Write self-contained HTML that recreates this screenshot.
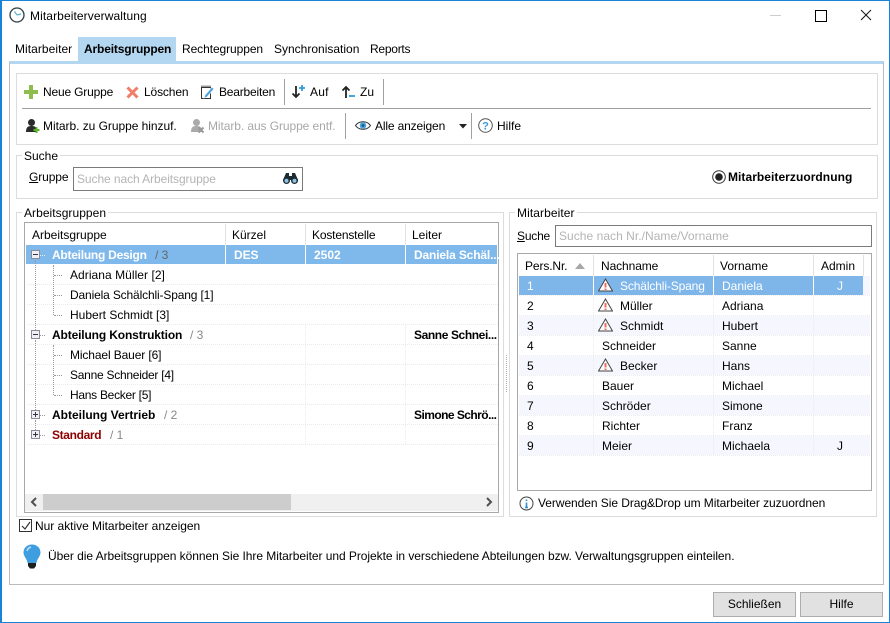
<!DOCTYPE html>
<html lang="de"><head><meta charset="utf-8"><title>Mitarbeiterverwaltung</title>
<style>
html,body{margin:0;padding:0;background:#fff}
#w{position:relative;width:890px;height:623px;overflow:hidden;background:#fff;font:12px/16px "Liberation Sans",sans-serif;color:#000}
#w div,#w svg{position:absolute}
.t{white-space:nowrap;height:16px}
.b{font-weight:bold}
.g{border:1px solid #dcdcdc;box-sizing:border-box}
.v{width:1px;background:#a0a0a0}
.l{background:#fff;padding:0 2px}
.r{left:27px;width:471px;height:0;border-bottom:1px dotted #ebebeb}
.q{left:519px;width:351px;height:0;border-bottom:1px dotted #ececec}
.n{color:#666}
.w{color:#fff}
.x{width:9px;height:9px;box-sizing:border-box;border:1px solid #8a8a9a;background:#f0f0f4}
u{text-decoration:underline}
</style></head><body><div id="w">

<div style="left:0;top:0;width:890px;height:623px;box-sizing:border-box;border:1px solid #1883d7;border-left-width:2px"></div>

<svg style="left:9px;top:7px" width="16" height="16" viewBox="0 0 16 16"><circle cx="8" cy="8" r="7" fill="#fff" stroke="#2c3e46" stroke-width="1.3"/><path d="M8 8L5.500 4.500M8 8L12 7" stroke="#5bb4c8" stroke-width="1.2" fill="none"/></svg>
<div class="t" style="left:30px;top:8px;letter-spacing:.1px">Mitarbeiterverwaltung</div>

<div style="left:770px;top:15px;width:11px;height:1px;background:#ccc"></div>
<div style="left:815px;top:10px;width:10px;height:10px;border:1px solid #000"></div>
<svg style="left:860px;top:9px" width="12" height="12" viewBox="0 0 12 12"><path d="M1 1L11 11M11 1L1 11" stroke="#111" stroke-width="1" fill="none"/></svg>

<div style="left:78px;top:37px;width:98px;height:24px;background:#b3d7f0"></div>
<div class="t" style="left:15px;top:41px;letter-spacing:.05px">Mitarbeiter</div>
<div class="t b" style="left:84px;top:41px;letter-spacing:-.15px">Arbeitsgruppen</div>
<div class="t" style="left:182px;top:41px;letter-spacing:-.08px">Rechtegruppen</div>
<div class="t" style="left:274px;top:41px">Synchronisation</div>
<div class="t" style="left:370px;top:41px;letter-spacing:-.25px">Reports</div>

<div style="left:9px;top:61px;width:875px;height:524px;box-sizing:border-box;border:1px solid #bcbcbc;border-top:3px solid #b3d7f0"></div>

<div class="g" style="left:16px;top:73px;width:862px;height:72px"></div>
<div style="left:22px;top:108px;width:849px;height:1px;background:#a0a0a0"></div>
<div class="v" style="left:284px;top:79px;height:26px"></div>
<div class="v" style="left:383px;top:79px;height:26px"></div>
<div class="v" style="left:345px;top:113px;height:26px"></div>
<div class="v" style="left:471px;top:113px;height:26px"></div>

<svg style="left:24px;top:85px" width="14" height="14"><path d="M5 0h4v5h5v4H9v5H5V9H0V5h5z" fill="#8fbc4f"/></svg>
<div class="t" style="left:43px;top:84px;letter-spacing:-.18px">Neue Gruppe</div>
<svg style="left:126px;top:86px" width="13" height="13"><path d="M1.500 1.500L11.500 11.500M11.500 1.500L1.500 11.500" stroke="#ef7f68" stroke-width="3" fill="none"/></svg>
<div class="t" style="left:144px;top:84px;letter-spacing:-.14px">Löschen</div>
<svg style="left:200px;top:84px" width="15" height="16"><path d="M1.500 3.500h9v11h-9z" fill="#fff" stroke="#333"/><path d="M2 1.500v2M4 1.500v2M6 1.500v2M8 1.500v2M10 1.500v2" stroke="#333"/><path d="M5 11L12 3l2 2-7 8-3 1z" fill="#4aa3df" stroke="#fff" stroke-width=".6"/></svg>
<div class="t" style="left:219px;top:84px;letter-spacing:-.2px">Bearbeiten</div>
<svg style="left:291px;top:84px" width="15" height="15"><path d="M5 2v11M1.500 9.500L5 13l3.500-3.500" stroke="#222" stroke-width="1.800" fill="none"/><path d="M11 1v6M8 4h6" stroke="#2f9ad8" stroke-width="1.800"/></svg>
<div class="t" style="left:310px;top:84px;letter-spacing:.2px">Auf</div>
<svg style="left:341px;top:84px" width="15" height="15"><path d="M5 14V3M1.500 6.500L5 3l3.500 3.500" stroke="#222" stroke-width="1.800" fill="none"/><path d="M8 12h6" stroke="#2f9ad8" stroke-width="1.800"/></svg>
<div class="t" style="left:360px;top:84px">Zu</div>

<svg style="left:26px;top:119px" width="14" height="15"><circle cx="5.500" cy="3.500" r="3.500" fill="#2b2b2b"/><path d="M0 13c0-5 2-6 5.500-6S11 8 11 13z" fill="#2b2b2b"/><path d="M10.500 8v6M7.500 11h6" stroke="#5fb52e" stroke-width="2"/></svg>
<div class="t" style="left:43px;top:118px;letter-spacing:-.04px">Mitarb. zu Gruppe hinzuf.</div>
<svg style="left:191px;top:119px" width="14" height="15"><circle cx="5.500" cy="3.500" r="3.500" fill="#aaa"/><path d="M0 13c0-5 2-6 5.500-6S11 8 11 13z" fill="#aaa"/><path d="M7.500 8.500l5 5M12.500 8.500l-5 5" stroke="#999" stroke-width="2"/></svg>
<div class="t" style="left:208px;top:118px;color:#a8a8a8;letter-spacing:-.08px">Mitarb. aus Gruppe entf.</div>
<svg style="left:355px;top:119px" width="16" height="13"><path d="M.5 6.500C4 1.500 12 1.500 15.500 6.500 12 11.500 4 11.500.5 6.500z" fill="#fff" stroke="#333"/><circle cx="8" cy="6.500" r="3.300" fill="#4aa3df"/><circle cx="8" cy="6.500" r="1.400" fill="#22557a"/></svg>
<div class="t" style="left:375px;top:118px;letter-spacing:-.15px">Alle anzeigen</div>
<svg style="left:459px;top:124px" width="8" height="5"><path d="M0 0h8L4 4.500z" fill="#222"/></svg>
<svg style="left:478px;top:118px" width="15" height="15"><circle cx="7.500" cy="7.500" r="6.800" fill="#fff" stroke="#555"/><text x="7.500" y="11.500" text-anchor="middle" font-family="Liberation Sans" font-weight="bold" font-size="11" fill="#3a9ad9">?</text></svg>
<div class="t" style="left:497px;top:118px">Hilfe</div>

<div class="g" style="left:16px;top:155px;width:862px;height:44px"></div>
<div class="t l" style="left:22px;top:148px">Suche</div>
<div class="t" style="left:29px;top:169px;letter-spacing:-.1px"><u>G</u>ruppe</div>
<div style="left:73px;top:167px;width:230px;height:24px;box-sizing:border-box;border:1px solid #7a7a7a"></div>
<div class="t" style="left:77px;top:171px;color:#b4b4b4;letter-spacing:-.08px">Suche nach Arbeitsgruppe</div>
<svg style="left:282px;top:172px" width="17" height="13"><path d="M4 1h3v3h3V1h3l3 7H1z" fill="#1d2b33"/><circle cx="4.500" cy="8.500" r="3.500" fill="#1d2b33"/><circle cx="12.500" cy="8.500" r="3.500" fill="#1d2b33"/><circle cx="4.500" cy="8.800" r="2" fill="#8ec4e6"/><circle cx="12.500" cy="8.800" r="2" fill="#8ec4e6"/></svg>
<svg style="left:712px;top:170px" width="14" height="14"><circle cx="7" cy="7" r="6.300" fill="#fff" stroke="#333"/><circle cx="7" cy="7" r="3.800" fill="#222"/></svg>
<div class="t b" style="left:728px;top:169px;letter-spacing:.05px">Mitarbeiterzuordnung</div>

<div class="g" style="left:16px;top:212px;width:488px;height:305px"></div>
<div class="t l" style="left:22px;top:205px;letter-spacing:.05px">Arbeitsgruppen</div>
<div style="left:24px;top:222px;width:475px;height:291px;box-sizing:border-box;border:1px solid #a8a8a8"></div>

<div class="t" style="left:32px;top:227px">Arbeitsgruppe</div>
<div class="t" style="left:232px;top:227px">Kürzel</div>
<div class="t" style="left:312px;top:227px;letter-spacing:-.17px">Kostenstelle</div>
<div class="t" style="left:412px;top:227px">Leiter</div>
<div style="left:225px;top:224px;width:1px;height:21px;background:#e2e2e2"></div>
<div style="left:305px;top:224px;width:1px;height:21px;background:#e2e2e2"></div>
<div style="left:405px;top:224px;width:1px;height:21px;background:#e2e2e2"></div>

<div style="left:26px;top:245px;width:471px;height:19px;background:#7fb9ec"></div>
<div style="left:225px;top:245px;width:1px;height:19px;background:#fff"></div>
<div style="left:305px;top:245px;width:1px;height:19px;background:#fff"></div>
<div style="left:405px;top:245px;width:1px;height:19px;background:#fff"></div>

<div class="r" style="top:284px"></div><div class="r" style="top:304px"></div><div class="r" style="top:324px"></div><div class="r" style="top:344px"></div><div class="r" style="top:364px"></div><div class="r" style="top:384px"></div><div class="r" style="top:404px"></div><div class="r" style="top:424px"></div><div class="r" style="top:444px"></div>
<div style="left:305px;top:325px;height:119px;width:0;border-left:1px dotted #ececec"></div>
<div style="left:405px;top:325px;height:119px;width:0;border-left:1px dotted #ececec"></div>

<div style="left:35px;top:260px;height:70px;width:0;border-left:1px dotted #999"></div>
<div style="left:35px;top:340px;height:70px;width:0;border-left:1px dotted #999"></div>
<div style="left:35px;top:420px;height:10px;width:0;border-left:1px dotted #999"></div>
<div style="left:53px;top:265px;height:50px;width:0;border-left:1px dotted #999"></div>
<div style="left:53px;top:345px;height:50px;width:0;border-left:1px dotted #999"></div>
<div style="left:54px;top:275px;width:8px;height:0;border-top:1px dotted #999"></div>
<div style="left:54px;top:295px;width:8px;height:0;border-top:1px dotted #999"></div>
<div style="left:54px;top:315px;width:8px;height:0;border-top:1px dotted #999"></div>
<div style="left:54px;top:355px;width:8px;height:0;border-top:1px dotted #999"></div>
<div style="left:54px;top:375px;width:8px;height:0;border-top:1px dotted #999"></div>
<div style="left:54px;top:395px;width:8px;height:0;border-top:1px dotted #999"></div>
<div style="left:40px;top:255px;width:5px;height:0;border-top:1px dotted #eee"></div>
<div style="left:40px;top:335px;width:5px;height:0;border-top:1px dotted #999"></div>
<div style="left:40px;top:415px;width:5px;height:0;border-top:1px dotted #999"></div>
<div style="left:40px;top:435px;width:5px;height:0;border-top:1px dotted #999"></div>

<div class="x" style="left:31px;top:250px"></div><div style="left:33px;top:254px;width:5px;height:1px;background:#334"></div>
<div class="x" style="left:31px;top:330px"></div><div style="left:33px;top:334px;width:5px;height:1px;background:#334"></div>
<div class="x" style="left:31px;top:410px"></div><div style="left:33px;top:414px;width:5px;height:1px;background:#334"></div><div style="left:35px;top:412px;width:1px;height:5px;background:#334"></div>
<div class="x" style="left:31px;top:430px"></div><div style="left:33px;top:434px;width:5px;height:1px;background:#334"></div><div style="left:35px;top:432px;width:1px;height:5px;background:#334"></div>

<div class="t b w" style="left:52px;top:247px;letter-spacing:-.25px">Abteilung Design</div><div class="t n" style="left:155px;top:247px">/ 3</div>
<div class="t b w" style="left:234px;top:247px;letter-spacing:-.1px">DES</div>
<div class="t b w" style="left:314px;top:247px">2502</div>
<div class="t b w" style="left:414px;top:247px;letter-spacing:-.15px">Daniela Schäl...</div>
<div class="t" style="left:70px;top:267px;letter-spacing:.05px">Adriana Müller [2]</div>
<div class="t" style="left:70px;top:287px;letter-spacing:-.15px">Daniela Schälchli-Spang [1]</div>
<div class="t" style="left:70px;top:307px">Hubert Schmidt [3]</div>
<div class="t b" style="left:52px;top:327px;letter-spacing:-.14px">Abteilung Konstruktion</div><div class="t n" style="left:190px;top:327px;color:#888">/ 3</div>
<div class="t b" style="left:414px;top:327px;letter-spacing:-.4px">Sanne Schnei...</div>
<div class="t" style="left:70px;top:347px;letter-spacing:-.12px">Michael Bauer [6]</div>
<div class="t" style="left:70px;top:367px;letter-spacing:-.26px">Sanne Schneider [4]</div>
<div class="t" style="left:70px;top:387px;letter-spacing:-.28px">Hans Becker [5]</div>
<div class="t b" style="left:52px;top:407px">Abteilung Vertrieb</div><div class="t n" style="left:164px;top:407px;color:#888">/ 2</div>
<div class="t b" style="left:414px;top:407px;letter-spacing:-.55px">Simone Schrö...</div>
<div class="t b" style="left:52px;top:427px;color:#8b0000;letter-spacing:-.35px">Standard</div><div class="t n" style="left:110px;top:427px;color:#888">/ 1</div>

<div style="left:25px;top:494px;width:473px;height:17px;background:#f0f0f0"></div>
<div style="left:43px;top:494px;width:248px;height:16px;background:#cdcdcd"></div>
<svg style="left:30px;top:497px" width="8" height="10"><path d="M6 1L2 5l4 4" stroke="#505050" stroke-width="2" fill="none"/></svg>
<svg style="left:485px;top:497px" width="8" height="10"><path d="M2 1l4 4-4 4" stroke="#505050" stroke-width="2" fill="none"/></svg>

<div style="left:506px;top:355px;height:37px;width:0;border-left:1px dotted #aaa"></div>

<div class="g" style="left:509px;top:212px;width:368px;height:305px"></div>
<div class="t l" style="left:515px;top:205px;letter-spacing:.08px">Mitarbeiter</div>
<div class="t" style="left:517px;top:228px;letter-spacing:-.2px"><u>S</u>uche</div>
<div style="left:555px;top:225px;width:317px;height:22px;box-sizing:border-box;border:1px solid #7a7a7a"></div>
<div class="t" style="left:559px;top:228px;color:#b4b4b4;letter-spacing:.04px">Suche nach Nr./Name/Vorname</div>

<div style="left:517px;top:253px;width:355px;height:238px;box-sizing:border-box;border:1px solid #a8a8a8"></div>
<div class="t" style="left:525px;top:258px;letter-spacing:-.12px">Pers.Nr.</div>
<svg style="left:575px;top:263px" width="10" height="6"><path d="M0 6h10L5 0z" fill="#a8a8a8"/></svg>
<div class="t" style="left:601px;top:258px;letter-spacing:-.1px">Nachname</div>
<div class="t" style="left:720px;top:258px">Vorname</div>
<div class="t" style="left:821px;top:258px">Admin</div>
<div style="left:593px;top:255px;width:1px;height:21px;background:#e2e2e2"></div>
<div style="left:713px;top:255px;width:1px;height:21px;background:#e2e2e2"></div>
<div style="left:813px;top:255px;width:1px;height:21px;background:#e2e2e2"></div>
<div style="left:863px;top:255px;width:1px;height:21px;background:#e2e2e2"></div>

<div style="left:519px;top:296px;width:351px;height:19px;background:#fff"></div>
<div style="left:519px;top:316px;width:351px;height:19px;background:#f6f6fe"></div>
<div style="left:519px;top:356px;width:351px;height:19px;background:#f6f6fe"></div>
<div style="left:519px;top:396px;width:351px;height:19px;background:#f6f6fe"></div>
<div style="left:519px;top:436px;width:351px;height:19px;background:#f6f6fe"></div>
<div style="left:519px;top:276px;width:351px;height:19px;background:#f6f6fe"></div>
<div style="left:519px;top:276px;width:344px;height:19px;background:#7fb6ea"></div>
<div style="left:593px;top:276px;width:1px;height:19px;background:#fff"></div>
<div style="left:713px;top:276px;width:1px;height:19px;background:#fff"></div>
<div style="left:813px;top:276px;width:1px;height:19px;background:#fff"></div>
<div class="q" style="top:295px"></div><div class="q" style="top:315px"></div><div class="q" style="top:335px"></div><div class="q" style="top:355px"></div><div class="q" style="top:375px"></div><div class="q" style="top:395px"></div><div class="q" style="top:415px"></div><div class="q" style="top:435px"></div><div class="q" style="top:455px"></div>
<div style="left:593px;top:296px;height:159px;width:0;border-left:1px dotted #ececec"></div>
<div style="left:713px;top:296px;height:159px;width:0;border-left:1px dotted #ececec"></div>
<div style="left:813px;top:296px;height:159px;width:0;border-left:1px dotted #ececec"></div>

<svg style="left:598px;top:278px" width="15" height="14"><path d="M7.500 1L14.500 13H.5z" fill="#fff" stroke="#444"/><path d="M7.500 5v4.500M7.500 10.500v1.500" stroke="#ef6f5e" stroke-width="2"/></svg>
<svg style="left:598px;top:298px" width="15" height="14"><path d="M7.500 1L14.500 13H.5z" fill="#fff" stroke="#444"/><path d="M7.500 5v4.500M7.500 10.500v1.500" stroke="#ef6f5e" stroke-width="2"/></svg>
<svg style="left:598px;top:318px" width="15" height="14"><path d="M7.500 1L14.500 13H.5z" fill="#fff" stroke="#444"/><path d="M7.500 5v4.500M7.500 10.500v1.500" stroke="#ef6f5e" stroke-width="2"/></svg>
<svg style="left:598px;top:358px" width="15" height="14"><path d="M7.500 1L14.500 13H.5z" fill="#fff" stroke="#444"/><path d="M7.500 5v4.500M7.500 10.500v1.500" stroke="#ef6f5e" stroke-width="2"/></svg>

<div class="t w" style="left:527px;top:278px">1</div><div class="t w" style="left:620px;top:278px;letter-spacing:-.13px">Schälchli-Spang</div><div class="t w" style="left:722px;top:278px">Daniela</div><div class="t w" style="left:837px;top:278px">J</div>
<div class="t" style="left:527px;top:298px">2</div><div class="t" style="left:620px;top:298px">Müller</div><div class="t" style="left:722px;top:298px">Adriana</div>
<div class="t" style="left:527px;top:318px">3</div><div class="t" style="left:620px;top:318px">Schmidt</div><div class="t" style="left:722px;top:318px">Hubert</div>
<div class="t" style="left:527px;top:338px">4</div><div class="t" style="left:602px;top:338px">Schneider</div><div class="t" style="left:722px;top:338px">Sanne</div>
<div class="t" style="left:527px;top:358px">5</div><div class="t" style="left:620px;top:358px">Becker</div><div class="t" style="left:722px;top:358px">Hans</div>
<div class="t" style="left:527px;top:378px">6</div><div class="t" style="left:602px;top:378px">Bauer</div><div class="t" style="left:722px;top:378px">Michael</div>
<div class="t" style="left:527px;top:398px">7</div><div class="t" style="left:602px;top:398px">Schröder</div><div class="t" style="left:722px;top:398px">Simone</div>
<div class="t" style="left:527px;top:418px">8</div><div class="t" style="left:602px;top:418px">Richter</div><div class="t" style="left:722px;top:418px">Franz</div>
<div class="t" style="left:527px;top:438px">9</div><div class="t" style="left:602px;top:438px">Meier</div><div class="t" style="left:722px;top:438px">Michaela</div><div class="t" style="left:837px;top:438px">J</div>

<svg style="left:519px;top:496px" width="15" height="15"><circle cx="7.500" cy="7.500" r="6.500" fill="#fff" stroke="#444"/><path d="M7.500 3.500v1.500M7.500 6.500v5M6 11.500h3" stroke="#2f8fd0" stroke-width="1.600" fill="none"/></svg>
<div class="t" style="left:538px;top:495px;letter-spacing:-.06px">Verwenden Sie Drag&amp;Drop um Mitarbeiter zuzuordnen</div>

<div style="left:19px;top:519px;width:11px;height:11px;border:1px solid #333;background:#fff"></div>
<svg style="left:20px;top:520px" width="12" height="12"><path d="M2 6l3 3 5-7" stroke="#333" stroke-width="1.200" fill="none"/></svg>
<div class="t" style="left:35px;top:518px;letter-spacing:-.03px">Nur aktive Mitarbeiter anzeigen</div>

<svg style="left:23px;top:544px" width="18" height="25"><path d="M9 .5C4 .5 .5 4 .5 8.500c0 4 3.500 6 4 10.500h9c.5-4.500 4-6.500 4-10.500C17.500 4 14 .5 9 .5z" fill="#3f9ee0"/><path d="M4 7c.5-2 2-3.500 4-4" stroke="#bfe0f7" stroke-width="1.500" fill="none"/><path d="M5 19h8v3l-2 2.500H7L5 22z" fill="#1e1e1e"/></svg>
<div class="t" style="left:48px;top:548px;letter-spacing:-.047px">Über die Arbeitsgruppen können Sie Ihre Mitarbeiter und Projekte in verschiedene Abteilungen bzw. Verwaltungsgruppen einteilen.</div>

<div style="left:713px;top:592px;width:83px;height:25px;box-sizing:border-box;border:1px solid #adadad;background:#e1e1e1;text-align:center;line-height:23px">Schließen</div>
<div style="left:800px;top:592px;width:83px;height:25px;box-sizing:border-box;border:1px solid #adadad;background:#e1e1e1;text-align:center;line-height:23px">Hilfe</div>

</div></body></html>
